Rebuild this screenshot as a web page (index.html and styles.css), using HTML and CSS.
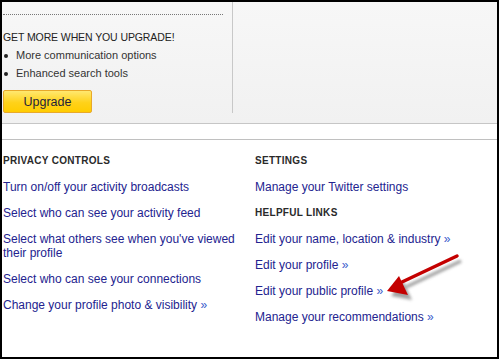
FILE: index.html
```html
<!DOCTYPE html>
<html lang="en">

<head>
  <meta charset="UTF-8">
  <meta name="viewport" content="width=device-width, initial-scale=1.0">
  <title>Account Settings</title>
  <link rel="stylesheet" href="styles.css">
</head>

<body>
  <div class="frame">
    <div class="upsell">
      <div class="upsell-main">
        <div class="dots"></div>
        <h2 class="upsell-title">GET MORE WHEN YOU UPGRADE!</h2>
        <ul class="perks">
          <li>More communication options</li>
          <li>Enhanced search tools</li>
        </ul>
        <button class="upgrade">Upgrade</button>
      </div>
    </div>

    <div class="links">
      <div class="col col-left">
        <h3>PRIVACY CONTROLS</h3>
        <a href="#">Turn on/off your activity broadcasts</a>
        <a href="#">Select who can see your activity feed</a>
        <a href="#">Select what others see when you've viewed their profile</a>
        <a href="#">Select who can see your connections</a>
        <a href="#">Change your profile photo &amp; visibility <span class="more">&raquo;</span></a>
      </div>
      <div class="col">
        <h3>SETTINGS</h3>
        <a href="#">Manage your Twitter settings</a>
        <h3>HELPFUL LINKS</h3>
        <a href="#">Edit your name, location &amp; industry <span class="more">&raquo;</span></a>
        <a href="#">Edit your profile <span class="more">&raquo;</span></a>
        <a href="#">Edit your public profile <span class="more">&raquo;</span></a>
        <a href="#">Manage your recommendations <span class="more">&raquo;</span></a>
      </div>
    </div>

    <!-- annotation arrow pointing at the public profile link -->
    <svg class="arrow" width="499" height="359" viewBox="0 0 499 359">
      <defs>
        <filter id="soft" x="-20%" y="-20%" width="140%" height="140%">
          <feGaussianBlur stdDeviation="1.6" />
        </filter>
      </defs>
      <g transform="translate(4 5)" fill="#8a8a8a" stroke="#8a8a8a" filter="url(#soft)" opacity="0.8">
        <line x1="457" y1="256" x2="402" y2="282" stroke-width="3.5" />
        <polygon points="387,291 399,276 408,295" stroke="none" />
      </g>
      <g fill="#c40000" stroke="#c40000">
        <line x1="457" y1="256" x2="402" y2="282" stroke-width="3.5" stroke-linecap="round" />
        <polygon points="387,291 399,276 408,295" stroke="none" />
      </g>
    </svg>
  </div>
</body>

</html>
```

FILE: styles.css
```css
body {
  margin: 0;
  background-color: #fff;
  font-family: "Liberation Sans", Arial, sans-serif;
}

.frame {
  position: relative;
  width: 499px;
  height: 359px;
  border: 2px solid #000;
  box-sizing: border-box;
  background-color: #fff;
}

.upsell {
  display: flex;
  height: 122px;
  border-bottom: 1px solid #c6c6c6;
  box-sizing: border-box;
  background: linear-gradient(#f7f7f7, #f1f1f1);
}

.upsell-main {
  width: 231px;
  height: 111px;
  padding: 0 9px 0 1px;
  border-right: 1px solid #c8c8c8;
  box-sizing: border-box;
}

.dots {
  margin-top: 12px;
  border-top: 1px dotted #777;
}

.upsell-title {
  margin: 14px 0 1px;
  font-size: 10.5px;
  font-weight: normal;
  letter-spacing: -0.1px;
  line-height: 16px;
  color: #222;
}

.perks {
  margin: 0;
  padding: 0;
  list-style: none;
}

.perks li {
  position: relative;
  padding-left: 13px;
  font-size: 11px;
  line-height: 18px;
  color: #333;
}

.perks li::before {
  content: "";
  position: absolute;
  left: 1px;
  top: 8px;
  width: 4px;
  height: 4px;
  border-radius: 50%;
  background-color: #222;
}

.upgrade {
  display: block;
  width: 89px;
  height: 23px;
  margin-top: 8px;
  padding: 0;
  border: 1px solid #e8a92a;
  border-radius: 2px;
  background: linear-gradient(#ffe870, #ffd21a 55%, #ffcc00);
  font-family: inherit;
  font-size: 12.5px;
  color: #1e1e3a;
  cursor: pointer;
}

.links {
  display: flex;
  margin-top: 15px;
  padding: 14px 0 0 1px;
  border-top: 1px solid #c0c0c0;
}

.col {
  display: flex;
  flex-direction: column;
  align-items: flex-start;
  gap: 12px;
}

.col-left {
  width: 252px;
}

.col h3 {
  margin: 0;
  font-size: 10px;
  font-weight: bold;
  letter-spacing: 0.3px;
  line-height: 14px;
  color: #2a2a2a;
}

.col a {
  font-size: 12px;
  line-height: 14px;
  color: #23238f;
  text-decoration: none;
}

.col a .more {
  color: #3a5ccc;
}

.arrow {
  position: absolute;
  left: -2px;
  top: -2px;
  pointer-events: none;
}
```
